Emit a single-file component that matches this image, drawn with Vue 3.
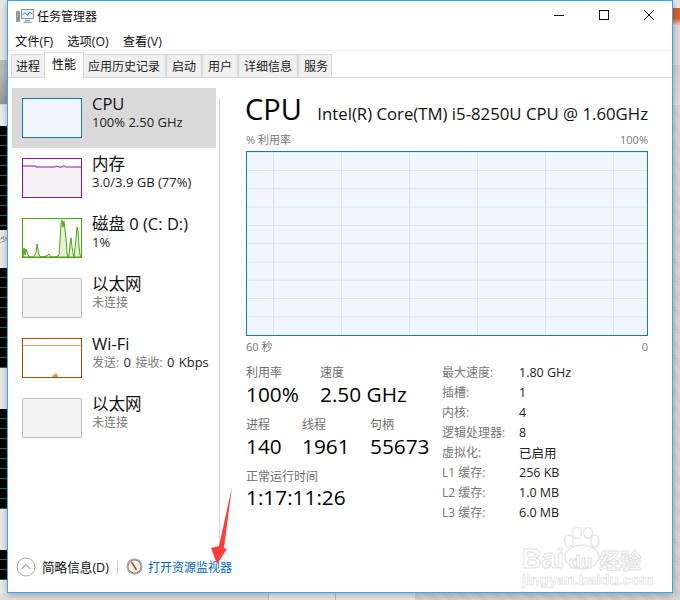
<script setup>
const tabs = ['进程', '性能', '应用历史记录', '启动', '用户', '详细信息', '服务']
const menus = ['文件(F)', '选项(O)', '查看(V)']
const specs = [
  ['最大速度:', '1.80 GHz'], ['插槽:', '1'], ['内核:', '4'], ['逻辑处理器:', '8'],
  ['虚拟化:', '已启用'], ['L1 缓存:', '256 KB'], ['L2 缓存:', '1.0 MB'], ['L3 缓存:', '6.0 MB'],
]
const diskPts = '0,38 1,29 2,36 3,30 5,36 7,38 10,38 13,34 14,25 16,36 18,38 24,37 26,35 28,38 32,38 35,37 36,36 37,22 38,5 39,1 40,8 41,2 43,20 44,34 45,38 46,36 47,25 48,19 49,28 50,34 51,38 53,20 54,8 55,12 56,28 57,36 58,38'
</script>

<template>
  <div class="page">
    <div class="top">
      <div class="strip-left">
        <div class="sl a"></div><div class="sl b"></div><div class="sl c"></div>
        <div class="sl black h1"></div>
        <div class="sl light h2"><span>少</span></div>
        <div class="sl black h3"></div>
        <div class="sl light h4"></div>
        <div class="sl black h5"></div>
        <div class="sl light h6"></div>
        <div class="sl black h7"></div>
        <div class="sl light h8"></div>
      </div>

      <div class="window">
        <div class="titlebar">
          <svg class="appicon" width="18" height="14" viewBox="0 0 18 14">
            <rect x="0" y="2" width="4" height="11" fill="#9a9a9a"/>
            <rect x="1" y="9" width="2" height="2" fill="#4caf50"/>
            <rect x="5.500" y="0.500" width="12" height="9" fill="#eaf4fb" stroke="#8a949c"/>
            <path d="M6.500 6 L9 3.500 L11.500 6.500 L13.500 3 L16.500 5" fill="none" stroke="#2f8fd0"/>
            <path d="M9 11.500 H14 M7.500 13.500 H15.500" stroke="#9aa3a8" stroke-width="1.500"/>
          </svg>
          <span class="apptitle">任务管理器</span>
          <div class="controls">
            <div class="ctl">
              <svg width="12" height="12" viewBox="0 0 12 12"><path d="M1 6.500 H11" stroke="#111"/></svg>
            </div>
            <div class="ctl">
              <svg width="12" height="12" viewBox="0 0 12 12"><rect x="1.500" y="1.500" width="9" height="9" fill="none" stroke="#111"/></svg>
            </div>
            <div class="ctl">
              <svg width="12" height="12" viewBox="0 0 12 12"><path d="M1 1 L11 11 M11 1 L1 11" stroke="#111" fill="none"/></svg>
            </div>
          </div>
        </div>

        <div class="menubar">
          <span v-for="m in menus" :key="m" class="menu">{{ m }}</span>
        </div>

        <div class="tabs">
          <div v-for="t in tabs" :key="t" class="tab" :class="{ active: t === '性能' }">{{ t }}</div>
        </div>

        <div class="body">
          <aside class="side">
            <div class="row selected">
              <div class="thumb cpu"></div>
              <div class="rowtext"><div class="rt">CPU</div><div class="rs dark">100% 2.50 GHz</div></div>
            </div>
            <div class="row">
              <div class="thumb mem">
                <svg width="58" height="38" viewBox="0 0 58 38">
                  <path d="M0 7 H13 V8 H32 L34 7 L36 8 L39 8 L41 6.500 L43 8 H58 V0 H0 Z" fill="#fff"/>
                  <path d="M0 7 H13 V8 H32 L34 7 L36 8 L39 8 L41 6.500 L43 8 H58" fill="none" stroke="#8b12ae"/>
                </svg>
              </div>
              <div class="rowtext"><div class="rt">内存</div><div class="rs dark">3.0/3.9 GB (77%)</div></div>
            </div>
            <div class="row">
              <div class="thumb disk">
                <svg width="58" height="38" viewBox="0 0 58 38">
                  <polygon :points="diskPts" fill="#e6f1dc" stroke="#4da60c" stroke-width="1"/>
                </svg>
              </div>
              <div class="rowtext"><div class="rt">磁盘 0 (C: D:)</div><div class="rs dark">1%</div></div>
            </div>
            <div class="row">
              <div class="thumb eth"></div>
              <div class="rowtext"><div class="rt">以太网</div><div class="rs cjk">未连接</div></div>
            </div>
            <div class="row">
              <div class="thumb wifi">
                <svg width="58" height="38" viewBox="0 0 58 38">
                  <path d="M0 6.500 H58" stroke="#d8a57a"/>
                  <path d="M29 38 L31 35 L32 36 L33 33 L35 38 Z" fill="#e08a5a"/>
                </svg>
              </div>
              <div class="rowtext">
                <div class="rt">Wi-Fi</div>
                <div class="rs wide"><span class="cjk">发送:</span> <b>0</b> <span class="cjk">接收:</span> <b>0 Kbps</b></div>
              </div>
            </div>
            <div class="row">
              <div class="thumb eth"></div>
              <div class="rowtext"><div class="rt">以太网</div><div class="rs cjk">未连接</div></div>
            </div>
          </aside>

          <div class="divider"></div>

          <main class="main">
            <div class="head">
              <span class="h-title">CPU</span>
              <span class="h-model">Intel(R) Core(TM) i5-8250U CPU @ 1.60GHz</span>
            </div>
            <div class="axis"><span>% 利用率</span><span>100%</span></div>
            <div class="graph"></div>
            <div class="axis second"><span>60 秒</span><span>0</span></div>

            <div class="stats">
              <div class="left">
                <div class="sr">
                  <div class="cell w74"><div class="lb">利用率</div><div class="val">100%</div></div>
                  <div class="cell"><div class="lb">速度</div><div class="val">2.50 GHz</div></div>
                </div>
                <div class="sr">
                  <div class="cell w56"><div class="lb">进程</div><div class="val">140</div></div>
                  <div class="cell w68"><div class="lb">线程</div><div class="val">1961</div></div>
                  <div class="cell"><div class="lb">句柄</div><div class="val">55673</div></div>
                </div>
                <div class="sr last">
                  <div class="cell"><div class="lb">正常运行时间</div><div class="val">1:17:11:26</div></div>
                </div>
              </div>
              <div class="right">
                <div v-for="s in specs" :key="s[0]" class="spec">
                  <span class="sk">{{ s[0] }}</span><span class="sv">{{ s[1] }}</span>
                </div>
              </div>
            </div>
          </main>
        </div>

        <div class="footer">
          <svg class="fewer" width="20" height="20" viewBox="0 0 20 20">
            <circle cx="10" cy="10" r="9" fill="#fff" stroke="#a8a8a8"/>
            <path d="M5.500 12 L10 7.500 L14.500 12" fill="none" stroke="#a8a8a8" stroke-width="1.200"/>
          </svg>
          <span class="fewer-t">简略信息(D)</span>
          <span class="vsep"></span>
          <svg class="gauge" width="17" height="17" viewBox="0 0 17 17">
            <circle cx="8.500" cy="8.500" r="8" fill="#8f8a80"/>
            <circle cx="8.500" cy="8.500" r="6" fill="#f6f3ee"/>
            <path d="M5.500 4 L10.500 12" stroke="#c8322a" stroke-width="1.500"/>
            <circle cx="8.500" cy="8.500" r="7.400" fill="none" stroke="#c8c4bb" stroke-width="0.700"/>
          </svg>
          <span class="link">打开资源监视器</span>
        </div>

        <div class="wm">
          <svg class="paw" width="44" height="48" viewBox="0 0 44 48">
            <g fill="#fff" stroke="#e6e6e6" stroke-width="1.500">
              <ellipse cx="7" cy="14" rx="4.500" ry="6"/>
              <ellipse cx="15" cy="6" rx="4.500" ry="5.500"/>
              <ellipse cx="26" cy="6" rx="4.500" ry="5.500"/>
              <ellipse cx="33" cy="14" rx="4" ry="6"/>
              <ellipse cx="20" cy="30" rx="17" ry="12"/>
            </g>
          </svg>
          <div class="wm-main"><span class="wm-b">Bai</span><span class="wm-du">du</span><span class="wm-j">经验</span></div>
          <div class="wm-sub">jingyan.baidu.com</div>
        </div>
      </div>

      <div class="strip-right">
        <div class="sr1"></div><div class="sr2"></div><div class="sr3"></div><div class="sr4"></div>
      </div>
    </div>
    <div class="bottom">
      <div class="b1"></div><div class="b2"></div><div class="b3"></div><div class="b4"></div>
    </div>

    <svg class="arrow" width="30" height="84" viewBox="0 0 30 84">
      <polygon points="27,3 19,64 22,65 12,80 6,64 14,62" fill="#ff3c3c"/>
    </svg>
  </div>
</template>

<style>
html, body { margin: 0; background: #e4e4e4; }
</style>

<style scoped>
.page {
  position: relative;
  width: 680px;
  height: 600px;
  overflow: hidden;
  background: #e4e4e4;
  font-family: "Open Sans", "Noto Sans CJK SC", sans-serif;
  color: #000;
}
.top { display: flex; height: 593px; }

.strip-left { width: 7px; display: flex; flex-direction: column; flex: none; }
.sl.a { height: 60px; background: #e9e9e9; }
.sl.b { height: 10px; background: #bdbdbd; }
.sl.c { height: 56px; background: linear-gradient(#c0c0c0 0, #9a9a9a 60%, #efefef 62%, #efefef 100%); }
.black { background: #000 repeating-linear-gradient(transparent 0 9px, #1f7a2a 9px 10px); }
.light { background: #ececec; }
.h1 { height: 104px; }
.h2 { height: 38px; font-size: 7px; line-height: 14px; color: #333; }
.h2 span { display: block; padding-top: 3px; }
.h3 { height: 100px; }
.h4 { height: 41px; }
.h5 { height: 100px; }
.h6 { height: 41px; }
.h7 { height: 30px; }
.h8 { flex: 1; }

.window {
  position: relative;
  width: 664px;
  height: 591px;
  flex: none;
  background: #fff;
  border: 1px solid #3aa5ee;
  box-shadow: 0 2px 8px rgba(0, 0, 0, 0.3);
  display: flex;
  flex-direction: column;
  z-index: 1;
}

.titlebar { height: 28px; display: flex; align-items: center; flex: none; }
.appicon { margin-left: 8px; margin-top: 2px; }
.apptitle { font-size: 12px; margin-left: 3px; margin-top: 2px; color: #111; }
.controls { display: flex; margin-left: auto; margin-right: 1px; }
.ctl { width: 45px; height: 28px; display: flex; align-items: center; justify-content: center; }

.menubar { height: 19px; padding-top: 2px; display: flex; align-items: center; border-bottom: 1px solid #f0f0f0; font-size: 12.300px; flex: none; padding-left: 7px; margin-bottom: -1px; box-sizing: content-box; color: #111; }
.menu { margin-right: 14px; }

.tabs { height: 24px; padding-top: 3px; display: flex; align-items: flex-end; padding-left: 3px; border-bottom: 1px solid #d9d9d9; flex: none; font-size: 12px; }
.tab {
  height: 22px;
  line-height: 24px;
  padding: 0 5px;
  border: 1px solid #d9d9d9;
  border-bottom: none;
  background: #f0f0f0;
  color: #222;
}
.tab:first-child { padding-left: 4px; }
.tab:last-child { padding-right: 3px; }
.tab.active {
  height: 25px;
  line-height: 24px;
  padding: 0 7px;
  background: #fff;
  margin: 0 -2px -1px;
  position: relative;
  z-index: 1;
  color: #000;
}

.body { flex: 1; display: flex; min-height: 0; }
.side { width: 204px; margin-left: 4px; padding-top: 10px; flex: none; }
.row { height: 60px; display: flex; align-items: flex-start; padding: 10px 0 0 10px; box-sizing: border-box; }
.row.selected { background: #d9d9d9; }
.thumb { width: 58px; height: 38px; border: 1px solid; flex: none; }
.thumb svg { display: block; }
.cpu { border-color: #117dbb; background: #f1f6fa; }
.mem { border-color: #8b12ae; background: #f4f2f4; }
.disk { border-color: #4da60c; background: #fff; }
.eth { border-color: #bcbcbc; background: #f4f4f4; border-radius: 1px; }
.wifi { border-color: #a74f01; background: #fff; }
.rowtext { margin-left: 10px; margin-top: -4px; white-space: nowrap; }
.rt { font-size: 16.500px; line-height: 20px; color: #111; }
.rs { font-size: 13px; line-height: 17px; color: #222; }
.rs.wide { word-spacing: 1px; }
.rs b { font-weight: 400; color: #222; }
.cjk { font-size: 12px; color: #7a7a7a; }
.rs.dark { color: #222; }

.divider { width: 1px; height: 454px; margin: 20px 0 0 3px; background: #d5d5d5; flex: none; }

.main { width: 402px; margin-left: 26px; flex: none; }
.head { display: flex; justify-content: space-between; align-items: baseline; height: 40px; margin-top: 11px; margin-left: -1px; }
.h-title { font-size: 29px; line-height: 40px; color: #000; }
.h-model { font-size: 16.750px; color: #111; white-space: nowrap; }
.axis { display: flex; justify-content: space-between; font-size: 11px; line-height: 16px; color: #777; margin-top: 3px; height: 19px; }
.axis.second { margin-top: 3px; height: 16px; }
.graph {
  height: 183px;
  border: 1px solid #187bb8;
  background-color: #f1f6fa;
  background-image:
    linear-gradient(to right, #d6e5f1 1px, transparent 1px),
    linear-gradient(to bottom, #d6e5f1 1px, transparent 1px);
  background-size: 68px 100%, 100% 18.300px;
  background-position: 26px 0, 0 18px;
}

.stats { display: flex; margin-top: 10px; }
.left { width: 196px; flex: none; }
.sr { display: flex; margin-bottom: 9px; }
.cell { flex: none; white-space: nowrap; }
.w74 { width: 74px; }
.w56 { width: 56px; }
.w68 { width: 68px; }
.lb { font-size: 12px; line-height: 16px; color: #6d6d6d; }
.val { font-size: 20.800px; line-height: 28px; margin-top: -1px; color: #000; }
.sr.last .val { margin-top: -2px; }
.right { margin-top: -3px; }
.spec { display: flex; height: 20px; align-items: center; font-size: 12px; white-space: nowrap; }
.sk { width: 77px; color: #777; }
.sv { color: #222; font-size: 12.500px; }

.footer { height: 39px; flex: none; display: flex; align-items: center; padding-left: 8px; box-sizing: border-box; padding-bottom: 12px; }
.fewer { flex: none; }
.fewer-t { font-size: 12.600px; margin-left: 6px; color: #111; }
.vsep { width: 1px; height: 14px; background: #c8c8c8; margin: 0 8px 0 8px; }
.gauge { flex: none; }
.link { font-size: 12px; color: #0066cc; margin-left: 5px; }

.wm { position: absolute; left: 514px; top: 526px; width: 125px; height: 62px; pointer-events: none; }
.paw { position: absolute; left: 40px; top: 0; }
.wm-main { position: absolute; left: 0; top: 16px; white-space: nowrap; font-family: "Liberation Sans", sans-serif; font-weight: 700; line-height: 32px; color: #fff; -webkit-text-stroke: 1px #e2e2e2; }
.wm-b { font-size: 27px; }
.wm-du { font-size: 19px; margin-left: 5px; }
.wm-j { font-size: 21px; margin-left: 7px; font-family: "Noto Sans CJK SC", sans-serif; }
.wm-sub { position: absolute; left: 0; top: 44px; white-space: nowrap; font-family: "Liberation Sans", sans-serif; font-size: 15px; font-weight: 700; color: #fff; -webkit-text-stroke: 0.700px #e2e2e2; }

.strip-right { width: 7px; flex: none; display: flex; flex-direction: column; }
.sr1 { height: 8px; background: #e8e8e8; }
.sr2 { height: 17px; background: linear-gradient(#d9622a 60%, #e8c8c0); }
.sr3 { height: 80px; background: linear-gradient(#dedede 0, #dedede 50%, #d2d2d2 50%, #e0e0e0 100%); }
.sr4 { flex: 1; background: #d0d0d0 repeating-linear-gradient(45deg, #cfcfcf 0 1px, #dcdcdc 1px 2px); }

.bottom { height: 7px; display: flex; }
.b1 { width: 268px; background: #e0e0e0; }
.b2 { width: 67px; background: #ececec; border-left: 1px solid #c4c4c4; box-sizing: border-box; }
.b3 { width: 80px; background: #ececec; border-left: 1px solid #c4c4c4; box-sizing: border-box; }
.b4 { flex: 1; background: #d0d0d0 repeating-linear-gradient(45deg, #cfcfcf 0 1px, #dcdcdc 1px 2px); }

.arrow { position: absolute; left: 205px; top: 484px; z-index: 2; }
</style>
